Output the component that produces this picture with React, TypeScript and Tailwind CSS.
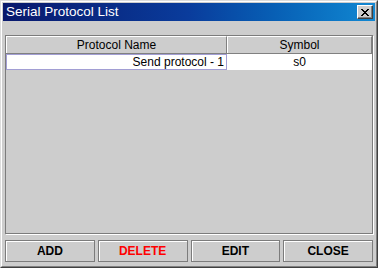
import React from "react";

const font = { fontFamily: '"Liberation Sans", Arial, sans-serif' };

const CloseGlyph = () => (
  <svg width="8" height="7" viewBox="0 0 8 7" shapeRendering="crispEdges">
    <path
      d="M0 0h2v1h-2zM6 0h2v1h-2zM1 1h2v1h-2zM5 1h2v1h-2zM2 2h4v1h-4zM3 3h2v1h-2zM2 4h4v1h-4zM1 5h2v1h-2zM5 5h2v1h-2zM0 6h2v1h-2zM6 6h2v1h-2z"
      fill="#000"
    />
  </svg>
);

const Btn = ({ label, red }: { label: string; red?: boolean }) => (
  <button
    className={`h-[22px] border border-[#7c7c7c] bg-[#cdcdcd] shadow-[inset_1px_1px_0_#ffffff] text-[12px] font-bold leading-none ${
      red ? "text-[#ff0000]" : "text-black"
    }`}
  >
    {label}
  </button>
);

export default function App() {
  return (
    <div className="w-[378px] h-[268px]" style={font}>
      <div className="w-full h-full border-t border-l border-[#dcdcdc] border-r-[#404040] border-b-[#404040] border-r border-b">
        <div className="w-full h-full border-t border-l border-white border-r border-b border-r-[#808080] border-b-[#808080] bg-[#cdcdcd] p-[1px] flex flex-col">
          {/* title bar */}
          <div className="h-[18px] flex items-center justify-between pl-[3px] pr-[2px] bg-gradient-to-r from-[#08186c] via-[#0a3c9c] to-[#1288d2]">
            <span className="text-white text-[13.5px] leading-none">Serial Protocol List</span>
            <div className="w-[16px] h-[14px] bg-[#cdcdcd] border-t border-l border-white border-r border-b border-r-[#404040] border-b-[#404040] shadow-[inset_-1px_-1px_0_#808080] flex items-center justify-center">
              <CloseGlyph />
            </div>
          </div>

          {/* body */}
          <div className="flex-1 flex flex-col px-[2px] pb-[2px]">
            <div className="mt-[14px] h-[199px] border border-[#7c7c7c] shadow-[1px_1px_0_#ffffff] flex flex-col text-[12px] text-black">
              <div className="flex h-[18px] border-b border-[#808080]">
                <div className="w-[221px] flex items-center justify-center border-r border-[#808080] border-t border-t-white border-l border-l-white">
                  Protocol Name
                </div>
                <div className="flex-1 flex items-center justify-center border-r border-[#808080] border-t border-t-white border-l border-l-white">
                  Symbol
                </div>
              </div>
              <div className="flex h-[16px] bg-white">
                <div className="w-[221px] flex items-center justify-end pr-[2px] border border-[#a29ed4]">
                  Send protocol - 1
                </div>
                <div className="flex-1 flex items-center justify-center">s0</div>
              </div>
            </div>

            <div className="mt-[6px] grid grid-cols-4 gap-[3px]">
              <Btn label="ADD" />
              <Btn label="DELETE" red />
              <Btn label="EDIT" />
              <Btn label="CLOSE" />
            </div>
          </div>
        </div>
      </div>
    </div>
  );
}
